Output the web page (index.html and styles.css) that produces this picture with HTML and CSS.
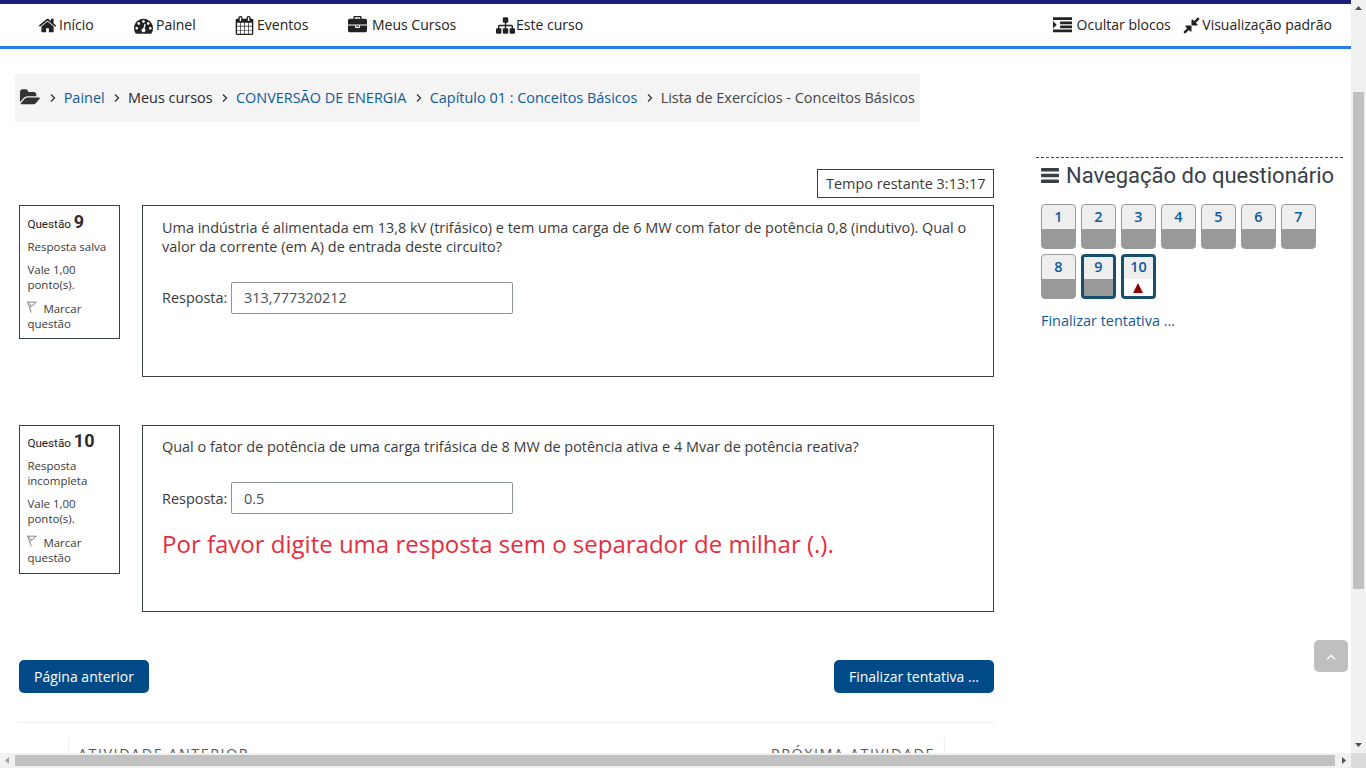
FILE: index.html
```html
<!DOCTYPE html>
<html lang="pt-br">
<head>
<meta charset="utf-8">
<title>Lista de Exercícios - Conceitos Básicos</title>
<link rel="stylesheet" href="styles.css">
</head>
<body>
<div class="window">
<div class="page">
  <header class="topnav">
    <nav class="menu">
      <a class="item home"><svg class="ico" viewBox="0 0 1792 1792"><path d="M1472 992v480q0 26-19 45t-45 19h-384v-384h-256v384h-384q-26 0-45-19t-19-45v-480q0-1 .5-3t.5-3l575-474 575 474q1 2 1 6zm223-69l-62 74q-8 9-21 11h-3q-13 0-21-7l-692-577-692 577q-12 8-24 7-13-2-21-11l-62-74q-8-10-7-23.5t11-21.5l719-599q32-26 76-26t76 26l244 204v-195q0-14 9-23t23-9h192q14 0 23 9t9 23v408l219 182q10 8 11 21.5t-7 23.5z"/></svg><span>Início</span></a>
      <a class="item panel"><svg class="ico" viewBox="0 0 1792 1792"><path d="M384 1152q0-53-37.5-90.5t-90.5-37.5-90.5 37.5-37.5 90.5 37.5 90.5 90.5 37.5 90.5-37.5 37.5-90.5zm192-448q0-53-37.5-90.5t-90.5-37.5-90.5 37.5-37.5 90.5 37.5 90.5 90.5 37.5 90.5-37.5 37.5-90.5zm428 481l101-382q6-26-7.5-48.5t-38.5-29.5-48 6.5-30 39.5l-101 382q-60 5-107 43.5t-63 98.5q-20 77 20 146t117 89 146-20 89-117q16-60-6-117t-72-91zm660-33q0-53-37.5-90.5t-90.5-37.5-90.5 37.5-37.5 90.5 37.5 90.5 90.5 37.5 90.5-37.5 37.5-90.5zm-640-640q0-53-37.5-90.5t-90.5-37.5-90.5 37.5-37.5 90.5 37.5 90.5 90.5 37.5 90.5-37.5 37.5-90.5zm448 192q0-53-37.5-90.5t-90.5-37.5-90.5 37.5-37.5 90.5 37.5 90.5 90.5 37.5 90.5-37.5 37.5-90.5zm320 448q0 261-141 483-19 29-54 29h-1402q-35 0-54-29-141-221-141-483 0-182 71-348t191-286 286-191 348-71 348 71 286 191 191 286 71 348z"/></svg><span>Painel</span></a>
      <a class="item events"><svg class="ico" viewBox="0 0 1792 1792"><path d="M192 1664h288v-288h-288v288zm352 0h320v-288h-320v288zm-352-352h288v-320h-288v320zm352 0h320v-320h-320v320zm-352-384h288v-288h-288v288zm736 736h320v-288h-320v288zm-384-736h320v-288h-320v288zm768 736h288v-288h-288v288zm-384-352h320v-320h-320v320zm-352-864v-288q0-13-9.5-22.5t-22.5-9.5h-64q-13 0-22.5 9.5t-9.5 22.5v288q0 13 9.5 22.5t22.5 9.5h64q13 0 22.5-9.5t9.5-22.5zm736 864h288v-320h-288v320zm-384-384h320v-288h-320v288zm384 0h288v-288h-288v288zm32-480v-288q0-13-9.5-22.5t-22.5-9.5h-64q-13 0-22.5 9.5t-9.5 22.5v288q0 13 9.5 22.5t22.5 9.5h64q13 0 22.5-9.5t9.5-22.5zm384-64v1280q0 52-38 90t-90 38h-1408q-52 0-90-38t-38-90v-1280q0-52 38-90t90-38h128v-96q0-66 47-113t113-47h64q66 0 113 47t47 113v96h384v-96q0-66 47-113t113-47h64q66 0 113 47t47 113v96h128q52 0 90 38t38 90z"/></svg><span>Eventos</span></a>
      <a class="item courses"><svg class="ico" viewBox="0 0 1792 1792"><path d="M640 256h512v-128h-512v128zm1152 640v480q0 66-47 113t-113 47h-1472q-66 0-113-47t-47-113v-480h672v160q0 26 19 45t45 19h320q26 0 45-19t19-45v-160h672zm-768 0v128h-256v-128h256zm768-480v384h-1792v-384q0-66 47-113t113-47h352v-160q0-40 28-68t68-28h576q40 0 68 28t28 68v160h352q66 0 113 47t47 113z"/></svg><span>Meus Cursos</span></a>
      <a class="item this"><svg class="ico" viewBox="0 0 1792 1792"><path d="M1792 1248v320q0 40-28 68t-68 28h-320q-40 0-68-28t-28-68v-320q0-40 28-68t68-28h96v-192h-512v192h96q40 0 68 28t28 68v320q0 40-28 68t-68 28h-320q-40 0-68-28t-28-68v-320q0-40 28-68t68-28h96v-192h-512v192h96q40 0 68 28t28 68v320q0 40-28 68t-68 28h-320q-40 0-68-28t-28-68v-320q0-40 28-68t68-28h96v-192q0-52 38-90t90-38h512v-192h-96q-40 0-68-28t-28-68v-320q0-40 28-68t68-28h320q40 0 68 28t28 68v320q0 40-28 68t-68 28h-96v192h512q52 0 90 38t38 90v192h96q40 0 68 28t28 68z"/></svg><span>Este curso</span></a>
    </nav>
    <nav class="tools">
      <a class="item"><svg class="ico" viewBox="0 0 1792 1792"><path d="M352 832l-352 352v-704zM0 128h1792v256H0zM672 512h1120v256H672zM672 896h1120v256H672zM0 1280h1792v256H0z"/></svg><span>Ocultar blocos</span></a>
      <a class="item"><svg class="ico compress" viewBox="0 0 1792 1792"><path d="M896 960v448q0 26-19 45t-45 19-45-19l-144-144-332 332q-10 10-23 10t-23-10l-114-114q-10-10-10-23t10-23l332-332-144-144q-19-19-19-45t19-45 45-19h448q26 0 45 19t19 45zm755-672q0 13-10 23l-332 332 144 144q19 19 19 45t-19 45-45 19h-448q-26 0-45-19t-19-45v-448q0-26 19-45t45-19 45 19l144 144 332-332q10-10 23-10t23 10l114 114q10 10 10 23z"/></svg><span>Visualização padrão</span></a>
    </nav>
  </header>

  <div class="crumbs">
    <svg class="folder" viewBox="0 0 1920 1792"><path d="M1879 952q0 31-31 66l-336 396q-43 51-120.5 86.5t-143.5 35.5h-1088q-34 0-60.5-13t-26.5-43q0-31 31-66l336-396q43-51 120.5-86.5t143.5-35.5h1088q34 0 60.5 13t26.5 43zm-343-344v160h-832q-94 0-197 47.5t-164 119.5l-337 396-5 6q0-4-.5-12.5t-.5-12.5v-960q0-92 66-158t158-66h320q92 0 158 66t66 158v32h544q92 0 158 66t66 158z"/></svg>
    <svg class="sep" viewBox="0 0 6 8"><path d="M1 .5L4.500 4 1 7.500"/></svg>
    <a class="link">Painel</a>
    <svg class="sep" viewBox="0 0 6 8"><path d="M1 .5L4.500 4 1 7.500"/></svg>
    <span class="dark">Meus cursos</span>
    <svg class="sep" viewBox="0 0 6 8"><path d="M1 .5L4.500 4 1 7.500"/></svg>
    <a class="link">CONVERSÃO DE ENERGIA</a>
    <svg class="sep" viewBox="0 0 6 8"><path d="M1 .5L4.500 4 1 7.500"/></svg>
    <a class="link">Capítulo 01 : Conceitos Básicos</a>
    <svg class="sep" viewBox="0 0 6 8"><path d="M1 .5L4.500 4 1 7.500"/></svg>
    <span>Lista de Exercícios - Conceitos Básicos</span>
  </div>

  <div class="columns">
    <main class="quiz">
      <div class="timer">Tempo restante 3:13:17</div>

      <section class="question q9">
        <aside class="info">
          <h3>Questão <b>9</b></h3>
          <p>Resposta salva</p>
          <p>Vale 1,00<br>ponto(s).</p>
          <p><svg class="flag" viewBox="0 0 10 12"><path d="M.5 .7L4.300 11.500M.5 1.200H9.200L3 6.500M2.300 2.500L4.300 5"/></svg>Marcar<br>questão</p>
        </aside>
        <div class="content">
          <p class="text">Uma indústria é alimentada em 13,8 kV (trifásico) e tem uma carga de 6 MW com fator de potência 0,8 (indutivo). Qual o<br>valor da corrente (em A) de entrada deste circuito?</p>
          <div class="answer"><label>Resposta:</label><div class="field">313,777320212</div></div>
        </div>
      </section>

      <section class="question q10">
        <aside class="info">
          <h3>Questão <b>10</b></h3>
          <p>Resposta<br>incompleta</p>
          <p>Vale 1,00<br>ponto(s).</p>
          <p><svg class="flag" viewBox="0 0 10 12"><path d="M.5 .7L4.300 11.500M.5 1.200H9.200L3 6.500M2.300 2.500L4.300 5"/></svg>Marcar<br>questão</p>
        </aside>
        <div class="content">
          <p class="text">Qual o fator de potência de uma carga trifásica de 8 MW de potência ativa e 4 Mvar de potência reativa?</p>
          <div class="answer"><label>Resposta:</label><div class="field">0.5</div></div>
          <p class="error">Por favor digite uma resposta sem o separador de milhar (.).</p>
        </div>
      </section>

      <div class="buttons"><a class="btn prev">Página anterior</a><a class="btn finish">Finalizar tentativa ...</a></div>
      <div class="activities"><span>ATIVIDADE ANTERIOR</span><span class="next">PRÓXIMA ATIVIDADE</span></div>
    </main>

    <aside class="block">
      <h2><svg class="bars" viewBox="0 0 18 15"><path d="M1 0h16q1 0 1 1v1.500q0 1-1 1H1q-1 0-1-1V1q0-1 1-1zM1 5.700h16q1 0 1 1v1.500q0 1-1 1H1q-1 0-1-1V6.700q0-1 1-1zM1 11.400h16q1 0 1 1v1.500q0 1-1 1H1q-1 0-1-1v-1.500q0-1 1-1z"/></svg><span>Navegação do questionário</span></h2>
      <div class="grid">
        <a class="num">1</a><a class="num">2</a><a class="num">3</a><a class="num">4</a><a class="num">5</a><a class="num">6</a><a class="num">7</a>
        <a class="num">8</a><a class="num here">9</a><a class="num here invalid">10</a>
      </div>
      <a class="link end">Finalizar tentativa ...</a>
    </aside>
  </div>

  <a class="totop"><svg viewBox="0 0 10 6"><path d="M1 5.300L5 1.300l4 4"/></svg></a>
</div>
<div class="vbar"><svg viewBox="0 0 7 4"><path d="M0 4L3.500 0 7 4z"/></svg><div class="vthumb"></div><svg viewBox="0 0 7 4"><path d="M0 0h7L3.500 4z"/></svg></div>
<div class="hbar"><svg class="off" viewBox="0 0 4 7"><path d="M4 0v7L0 3.500z"/></svg><div class="hthumb"></div><svg viewBox="0 0 4 7"><path d="M0 0v7l4-3.500z"/></svg></div>
<div class="corner"></div>
</div>
</body>
</html>
```
FILE: styles.css
```css
* { box-sizing: border-box; }
body { margin: 0; font: 14.450px/19px "Open Sans", sans-serif; color: #3a3a3a; background: #fff; }
h2, h3, p { margin: 0; }
.window { width: 1366px; height: 768px; overflow: hidden; display: grid; grid-template: 753px 15px / 1351px 15px; }
.page { position: relative; overflow: hidden; white-space: nowrap; }

.topnav { height: 49px; border-top: 4px solid #1a1f7a; border-bottom: 3px solid #2a7af0; display: flex; justify-content: space-between; align-items: center; padding: 0 19px 1px 38px; font-size: 14px; color: #222; }
.menu, .tools, .item { display: flex; align-items: center; }
.ico { width: 19px; height: 19px; fill: #222; flex: none; margin-top: 1px; }
.home { width: 95.500px; gap: 2px; }
.panel { width: 101.500px; gap: 3.500px; }
.events { width: 113px; gap: 3px; }
.courses { width: 148px; gap: 5px; }
.this { gap: 1px; }
.tools { gap: 11px; }
.tools .item { gap: 4.500px; }
.tools .compress { margin-right: -3px; }

.crumbs { display: flex; align-items: center; width: 905px; height: 48px; margin: 25px 0 0 15px; padding: 0 0 1px 5px; background: #f4f4f4; color: #444; }
.folder { width: 20.400px; height: 19px; fill: #333; }
.sep { width: 6px; height: 8px; margin: 1px 8px 0 9.300px; fill: none; stroke: #333; stroke-width: 1.300; flex: none; }
.link { color: #0f5a9a; }
.dark { color: #2a2a2a; }

.columns { display: flex; margin-top: 35px; }
.quiz { width: 975px; margin-left: 19px; padding-top: 12px; flex: none; }
.timer { width: 177px; height: 29px; margin-left: auto; border: 1px solid #c00; padding: 4px 8px; }
.question { display: flex; justify-content: space-between; align-items: flex-start; }
.q9 { margin-top: 7px; }
.q10 { margin-top: 48px; }
.info { width: 101px; height: 134px; border: 1px solid #373f49; padding: 7px 7px 0 7.400px; font-size: 11.500px; line-height: 15px; }
.q10 .info { height: 149px; padding-top: 6px; }
.info h3 { font: 400 11.700px/18px Roboto, sans-serif; color: #222; }
.info h3 b { font-size: 18px; font-weight: 700; color: #2c2c2c; }
.info p { margin-top: 8px; }
.info h3 + p { margin-top: 6px; }
.info p:last-child { margin-top: 9px; }
.flag { width: 10px; height: 12px; margin-right: 6px; fill: none; stroke: #777; stroke-width: .9; vertical-align: 0; }
.content { width: 852px; height: 172px; border: 1px solid #373f49; padding: 12px 19px; }
.q10 .content { height: 187px; }
.answer { display: flex; align-items: center; margin-top: 26px; }
.answer label { flex: none; width: 65px; }
.field { width: 282px; height: 32px; margin-left: 4px; border: 1px solid #8f959e; border-radius: 2px; padding: 6px 12px; color: #495057; }
.q9 .field { padding-top: 5px; }
.q9 label { padding-bottom: 2px; }
.error { margin-top: 12px; font-size: 24px; line-height: 36px; color: #e52d3d; }
.q10 .text { margin-top: -1px; }
.buttons { display: flex; justify-content: space-between; margin-top: 48px; }
.btn { height: 33px; border-radius: 5px; background: #004b87; color: #fff; font-size: 14px; line-height: 33px; text-align: center; }
.prev { width: 130px; }
.finish { width: 160px; }
.activities { margin-top: 29px; border-top: 1px solid #eee; height: 60px; padding: 14px 49px 0; display: flex; justify-content: space-between; font-size: 14.400px; letter-spacing: 1.500px; color: #555; }
.activities span { border-left: 1px solid #eee; padding: 7px 0 0 9px; }
.activities .next { border-left: 0; border-right: 1px solid #eee; padding: 7px 9px 0 0; }

.block { width: 307px; margin-left: 42px; border-top: 1px dashed #444; }
.block h2 { display: flex; align-items: center; gap: 7px; padding-left: 5px; height: 35px; font: 400 22px/26px Roboto, sans-serif; color: #373f49; }
.bars { width: 18px; height: 15px; fill: #373f49; }
.grid { display: flex; flex-wrap: wrap; gap: 5px; padding: 11px 0 0 5px; }
.num { width: 35px; height: 45px; border: 1px solid #999; border-radius: 4px; background: linear-gradient(#eee 24px, #999 24px); font-weight: 600; line-height: 24px; text-align: center; color: #0f5a9a; }
.here { border: 3px solid #17506f; background: linear-gradient(#eee 22px, #999 22px); line-height: 20px; }
.invalid { background: linear-gradient(#eee 22px, #fff 22px); display: flex; flex-direction: column; align-items: center; }
.invalid::after { content: ""; margin: 6px 1px 0 0; border: 5px solid transparent; border-top: 0; border-bottom: 10px solid #8b0000; }
.end { display: block; padding: 12px 0 0 5px; }

.totop { position: absolute; left: 1314px; top: 640px; width: 34px; height: 32px; border-radius: 5px; background: #bfbfbf; display: flex; align-items: center; justify-content: center; }
.totop svg { width: 10px; height: 6px; margin-top: 2px; fill: none; stroke: #fff; stroke-width: 1.300; }
.vbar, .hbar { background: #f1f1f1; display: flex; align-items: center; justify-content: space-between; }
.vbar svg, .hbar svg { fill: #505050; }
.vbar { flex-direction: column; padding: 6px 0; }
.vbar svg { width: 7px; height: 4px; }
.vthumb { width: 11px; height: 497px; margin-bottom: 73px; background: #c1c1c1; }
.hbar { padding: 0 5px; }
.hbar svg { width: 4px; height: 7px; }
.hbar .off { fill: #a3a3a3; }
.hthumb { width: 1320px; height: 11px; margin-right: 2px; background: #c1c1c1; }
.corner { background: #dcdcdc; }
```
